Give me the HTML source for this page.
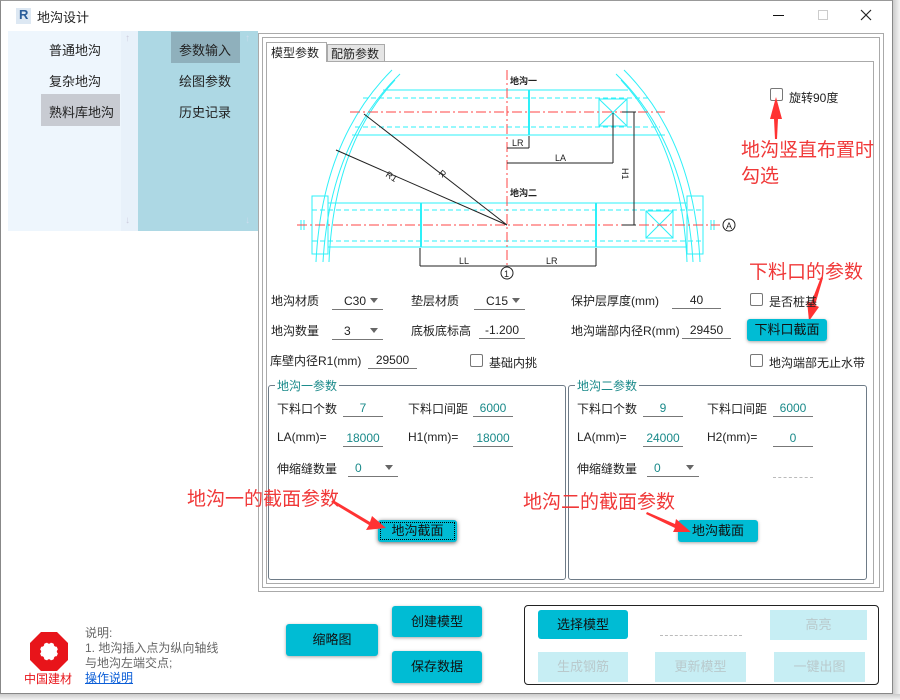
<!DOCTYPE html>
<html><head><meta charset="utf-8"><style>
*{margin:0;padding:0;box-sizing:border-box}
body{width:900px;height:700px;background:#fff;position:relative;overflow:hidden;font-family:"Liberation Sans","Noto Sans CJK SC",sans-serif;font-size:12px;color:#222}
.a{position:absolute}
.t{position:absolute;white-space:nowrap;font-size:12px}
.u{position:absolute;border-bottom:1px solid #777;height:20px;font-size:12px;text-align:center;line-height:22px}
.tl{color:#1a8a8a}
.dd{position:absolute;border-bottom:1px solid #777;height:20px;font-size:12px;line-height:22px;padding-left:12px}
.dd:after{content:"";position:absolute;right:5px;top:8px;border:4px solid transparent;border-top:5px solid #666}
.cb{position:absolute;width:13px;height:13px;border:1.5px solid #777;border-radius:2px;background:#fff}
.btn{position:absolute;background:#00bcd4;border-radius:3px;text-align:center;font-size:13px;color:#111;box-shadow:0 1px 3px rgba(0,0,0,.35)}
.dis{position:absolute;background:#c7eef4;text-align:center;font-size:13px;color:#b9c9cc}
.red{position:absolute;color:#f03838;font-size:19px;white-space:nowrap}
.grp{position:absolute;border:1px solid #6e7b87;border-radius:3px}
.gt{position:absolute;top:-9px;left:6px;background:#fff;padding:0 2px;color:#1a8a8a;font-size:12px}
</style></head><body>
<div class="a" style="left:0;top:0;width:893px;height:694px;border:1px solid #888;border-top:1px solid #999"></div>
<div class="a" style="left:893px;top:0;width:7px;height:700px;background:linear-gradient(90deg,#ccc,#f4f4f4)"></div>
<div class="a" style="left:0;top:694px;width:900px;height:6px;background:linear-gradient(#ccc,#f4f4f4)"></div>
<div class="a" style="left:16px;top:8px;width:15px;height:16px;background:#dde8f3"></div>
<div class="t" style="left:19px;top:7px;font-weight:bold;color:#2a5d9a;font-size:13px">R</div>
<div class="t" style="left:37px;top:7px;font-size:13px">地沟设计</div>
<div class="a" style="left:773px;top:15px;width:11px;height:1px;background:#111"></div>
<div class="a" style="left:818px;top:10px;width:10px;height:10px;border:1px solid #ccc"></div>
<svg class="a" style="left:860px;top:9px" width="12" height="12"><path d="M1,1 L11,11 M11,1 L1,11" stroke="#222" stroke-width="1.2"/></svg>
<div class="a" style="left:8px;top:31px;width:130px;height:200px;background:#eef6fd"></div>
<div class="a" style="left:121px;top:31px;width:17px;height:200px;background:#e8f1fa"></div>
<div class="t" style="left:49px;top:40px;font-size:13px">普通地沟</div>
<div class="t" style="left:49px;top:71px;font-size:13px">复杂地沟</div>
<div class="a" style="left:41px;top:94px;width:79px;height:32px;background:#c8cbd2"></div>
<div class="t" style="left:49px;top:102px;font-size:13px">熟料库地沟</div>
<div class="a" style="left:138px;top:31px;width:120px;height:200px;background:#add8e4"></div>
<div class="a" style="left:171px;top:32px;width:69px;height:31px;background:#8fb0bc"></div>
<div class="t" style="left:179px;top:40px;font-size:13px">参数输入</div>
<div class="t" style="left:179px;top:71px;font-size:13px">绘图参数</div>
<div class="t" style="left:179px;top:102px;font-size:13px">历史记录</div>
<div class="t" style="left:125px;top:33px;color:#ccd;font-size:10px">↑</div>
<div class="t" style="left:125px;top:215px;color:#ccd;font-size:10px">↓</div>
<div class="t" style="left:245px;top:33px;color:#cde;font-size:10px">↑</div>
<div class="t" style="left:245px;top:215px;color:#cde;font-size:10px">↓</div>
<div class="a" style="left:258px;top:33px;width:626px;height:559px;border:1px solid #aaa"></div>
<div class="a" style="left:262px;top:37px;width:618px;height:551px;border:1px solid #aaa"></div>
<div class="a" style="left:266px;top:61px;width:608px;height:523px;border:1px solid #aaa"></div>
<div class="a" style="left:266px;top:42px;width:61px;height:20px;border:1px solid #aaa;border-bottom:none;background:#fff"></div>
<div class="t" style="left:271px;top:44px">模型参数</div>
<div class="a" style="left:327px;top:44px;width:58px;height:18px;border:1px solid #aaa;background:#e5e5e5"></div>
<div class="t" style="left:331px;top:45px">配筋参数</div>
<svg class="a" style="left:0;top:0" width="900" height="290" fill="none" stroke-width="1">
<g stroke="#2ef0f8">
<path d="M392,70 Q322,140 316,262"/><path d="M400,74 Q330,142 323,262"/>
<path d="M395,80 Q334,145 329,262"/>
<path d="M624,70 Q694,140 700,262"/><path d="M616,74 Q686,142 693,262"/>
<path d="M621,80 Q682,145 687,262"/>
<line x1="383" y1="90" x2="628" y2="90"/><line x1="352" y1="135" x2="665" y2="135"/>
<line x1="363" y1="98" x2="650" y2="98" stroke-dasharray="5 3"/><line x1="355" y1="127" x2="660" y2="127" stroke-dasharray="5 3"/>
<line x1="529" y1="90" x2="529" y2="135" stroke-width="2"/>
<rect x="328" y="203" width="359" height="44"/>
<line x1="312" y1="210" x2="704" y2="210" stroke-dasharray="5 3"/><line x1="312" y1="241" x2="704" y2="241" stroke-dasharray="5 3"/>
<rect x="312" y="196" width="16" height="58"/><rect x="687" y="196" width="16" height="58"/>
<line x1="421" y1="203" x2="421" y2="247" stroke-width="2"/><line x1="596" y1="203" x2="596" y2="247" stroke-width="2"/>
<rect x="599" y="99" width="28" height="27"/><path d="M599,99 L627,126 M627,99 L599,126"/>
<rect x="646" y="211" width="27" height="27"/><path d="M646,211 L673,238 M673,211 L646,238"/>
<path d="M301,220 v10 M304,220 v10 M711,220 v10 M714,220 v10"/>
</g>
<g stroke="#f44" stroke-dasharray="10 3 2 3">
<line x1="507" y1="70" x2="507" y2="270"/>
<line x1="350" y1="112" x2="665" y2="112"/>
<line x1="297" y1="225" x2="720" y2="225"/>
</g>
<g stroke="#222">
<line x1="507" y1="225" x2="364" y2="114"/><line x1="507" y1="225" x2="336" y2="150"/>
<line x1="420" y1="266" x2="596" y2="266"/><line x1="420" y1="248" x2="420" y2="266"/><line x1="596" y1="248" x2="596" y2="266"/>
<circle cx="507" cy="273" r="6" fill="#fff"/>
<line x1="507" y1="148" x2="529" y2="148"/><line x1="529" y1="136" x2="529" y2="148"/>
<line x1="507" y1="163" x2="613" y2="163"/><line x1="613" y1="113" x2="613" y2="163"/>
<line x1="634" y1="112" x2="634" y2="225"/><line x1="622" y1="112" x2="636" y2="112"/><line x1="622" y1="225" x2="636" y2="225"/>
<circle cx="729" cy="225" r="6" fill="#fff"/>
</g>
<g fill="#222" stroke="none" font-family="Liberation Sans,Noto Sans CJK SC,sans-serif" font-size="9">
<text x="510" y="84" font-weight="bold">地沟一</text><text x="510" y="196" font-weight="bold">地沟二</text>
<text x="512" y="146">LR</text><text x="555" y="161">LA</text>
<text x="459" y="264">LL</text><text x="546" y="264">LR</text>
<text x="504" y="277">1</text><text x="726" y="229">A</text>
<text x="385" y="176" transform="rotate(33 385 176)">R1</text><text x="438" y="174" transform="rotate(40 438 174)">R</text>
<text x="622" y="168" transform="rotate(90 622 168)">H1</text>
</g>
</svg>
<div class="cb" style="left:770px;top:88px"></div>
<div class="t" style="left:789px;top:89px">旋转90度</div>
<svg class="a" style="left:766px;top:95px" width="20" height="45"><polygon points="10,2 4,24 8,24 9,44 11,44 12,24 16,24" fill="#f33"/></svg>
<div class="red" style="left:741px;top:135px">地沟竖直布置时</div>
<div class="red" style="left:741px;top:161px">勾选</div>
<div class="red" style="left:749px;top:257px">下料口的参数</div>
<svg class="a" style="left:795px;top:275px" width="30" height="50"><polygon points="26,2 16,28 12,26 14,46 24,32 20,30 28,3" fill="#f33"/></svg>
<div class="t" style="left:271px;top:292px">地沟材质</div>
<div class="dd" style="left:332px;top:290px;width:51px">C30</div>
<div class="t" style="left:411px;top:292px">垫层材质</div>
<div class="dd" style="left:474px;top:290px;width:51px">C15</div>
<div class="t" style="left:571px;top:292px">保护层厚度(mm)</div>
<div class="u" style="left:672px;top:289px;width:49px">40</div>
<div class="cb" style="left:750px;top:293px"></div>
<div class="t" style="left:769px;top:293px">是否桩基</div>
<div class="t" style="left:271px;top:322px">地沟数量</div>
<div class="dd" style="left:332px;top:320px;width:51px">3</div>
<div class="t" style="left:411px;top:322px">底板底标高</div>
<div class="u" style="left:479px;top:319px;width:46px">-1.200</div>
<div class="t" style="left:571px;top:322px">地沟端部内径R(mm)</div>
<div class="u" style="left:682px;top:319px;width:49px">29450</div>
<div class="btn" style="left:747px;top:319px;width:80px;height:22px;line-height:22px;font-size:13px">下料口截面</div>
<div class="t" style="left:270px;top:352px">库壁内径R1(mm)</div>
<div class="u" style="left:368px;top:349px;width:49px">29500</div>
<div class="cb" style="left:470px;top:354px"></div>
<div class="t" style="left:489px;top:354px">基础内挑</div>
<div class="cb" style="left:750px;top:354px"></div>
<div class="t" style="left:769px;top:354px">地沟端部无止水带</div>
<div class="grp" style="left:268px;top:385px;width:298px;height:195px"><span class="gt">地沟一参数</span></div>
<div class="t" style="left:277px;top:400px">下料口个数</div>
<div class="u tl" style="left:343px;top:397px;width:40px">7</div>
<div class="t" style="left:408px;top:400px">下料口间距</div>
<div class="u tl" style="left:473px;top:397px;width:40px">6000</div>
<div class="t" style="left:277px;top:430px">LA(mm)=</div>
<div class="u tl" style="left:343px;top:427px;width:40px">18000</div>
<div class="t" style="left:408px;top:430px">H1(mm)=</div>
<div class="u tl" style="left:473px;top:427px;width:40px">18000</div>
<div class="t" style="left:277px;top:460px">伸缩缝数量</div>
<div class="dd" style="left:348px;top:457px;width:50px;color:#1a8a8a;padding-left:7px">0</div>
<div class="btn" style="left:378px;top:520px;width:79px;height:22px;line-height:22px;box-shadow:0 1px 4px rgba(0,0,0,.6)"><div class="a" style="left:2px;top:2px;right:2px;bottom:2px;border:1px dotted #000"></div>地沟截面</div>
<div class="red" style="left:187px;top:484px">地沟一的截面参数</div>
<svg class="a" style="left:330px;top:498px" width="60" height="35"><polygon points="3,2 40,24 42,18 56,30 36,32 39,27 1,4" fill="#f33"/></svg>
<div class="grp" style="left:568px;top:385px;width:299px;height:195px"><span class="gt">地沟二参数</span></div>
<div class="t" style="left:577px;top:400px">下料口个数</div>
<div class="u tl" style="left:643px;top:397px;width:40px">9</div>
<div class="t" style="left:707px;top:400px">下料口间距</div>
<div class="u tl" style="left:773px;top:397px;width:40px">6000</div>
<div class="t" style="left:577px;top:430px">LA(mm)=</div>
<div class="u tl" style="left:643px;top:427px;width:40px">24000</div>
<div class="t" style="left:707px;top:430px">H2(mm)=</div>
<div class="u tl" style="left:773px;top:427px;width:40px">0</div>
<div class="t" style="left:577px;top:460px">伸缩缝数量</div>
<div class="dd" style="left:647px;top:457px;width:52px;color:#1a8a8a;padding-left:7px">0</div>
<div class="a" style="left:773px;top:477px;width:40px;border-top:1px dashed #bbb"></div>
<div class="btn" style="left:678px;top:520px;width:80px;height:22px;line-height:22px">地沟截面</div>
<div class="red" style="left:523px;top:487px">地沟二的截面参数</div>
<svg class="a" style="left:645px;top:510px" width="50" height="25"><polygon points="2,2 30,14 31,9 46,22 28,22 30,18 1,4" fill="#f33"/></svg>
<svg class="a" style="left:29px;top:631px" width="40" height="42"><polygon points="12,1 28,1 39,12 39,29 28,40 12,40 1,29 1,12" fill="#e8141a"/><circle cx="20" cy="20.5" r="9" fill="#fff"/><g fill="#e8141a"><circle cx="20" cy="10.5" r="2.2"/><circle cx="20" cy="30.5" r="2.2"/><circle cx="10" cy="20.5" r="2.2"/><circle cx="30" cy="20.5" r="2.2"/><circle cx="13" cy="13.5" r="2.2"/><circle cx="27" cy="13.5" r="2.2"/><circle cx="13" cy="27.5" r="2.2"/><circle cx="27" cy="27.5" r="2.2"/></g></svg>
<div class="t" style="left:24px;top:670px;color:#e8141a;font-size:12px">中国建材</div>
<div class="t" style="left:85px;top:624px;color:#666">说明:</div>
<div class="t" style="left:85px;top:639px;color:#666">1. 地沟插入点为纵向轴线</div>
<div class="t" style="left:85px;top:654px;color:#666">与地沟左端交点;</div>
<div class="t" style="left:85px;top:669px;color:#0b5ed7;text-decoration:underline">操作说明</div>
<div class="btn" style="left:286px;top:624px;width:92px;height:32px;line-height:32px">缩略图</div>
<div class="btn" style="left:392px;top:606px;width:90px;height:31px;line-height:31px">创建模型</div>
<div class="btn" style="left:392px;top:651px;width:90px;height:32px;line-height:32px">保存数据</div>
<div class="a" style="left:524px;top:605px;width:355px;height:80px;border:1px solid #222;border-radius:4px"></div>
<div class="btn" style="left:538px;top:610px;width:90px;height:29px;line-height:29px;box-shadow:none">选择模型</div>
<div class="a" style="left:660px;top:635px;width:82px;border-top:1px dashed #bbb"></div>
<div class="dis" style="left:770px;top:610px;width:97px;height:30px;line-height:30px">高亮</div>
<div class="dis" style="left:538px;top:652px;width:90px;height:30px;line-height:30px">生成钢筋</div>
<div class="dis" style="left:655px;top:652px;width:91px;height:30px;line-height:30px">更新模型</div>
<div class="dis" style="left:774px;top:652px;width:91px;height:30px;line-height:30px">一键出图</div>
</body></html>
